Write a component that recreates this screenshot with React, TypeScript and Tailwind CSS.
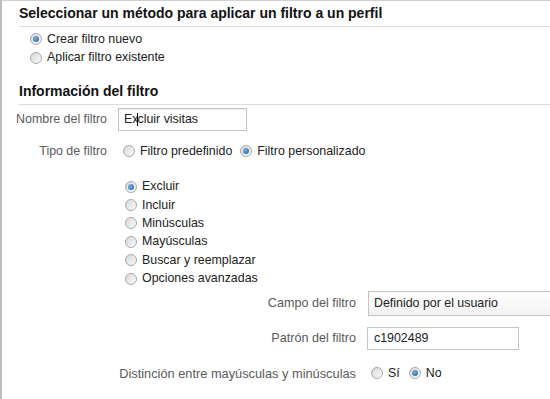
import React from "react";

function Radio({ checked = false }: { checked?: boolean }) {
  return (
    <span className="flex h-[12px] w-[12px] shrink-0 items-center justify-center rounded-full border border-[#a9a9a9] bg-gradient-to-br from-[#d8d8d8] to-[#fbfbfb]">
      {checked && (
        <span className="h-[6px] w-[6px] rounded-full bg-[radial-gradient(circle_at_35%_35%,#7ab0e0,#1f5f9f)]" />
      )}
    </span>
  );
}

function Option({ label, checked = false }: { label: string; checked?: boolean }) {
  return (
    <label className="flex h-[18.4px] items-center gap-[5px] text-[12.4px] text-[#222]">
      <Radio checked={checked} />
      <span>{label}</span>
    </label>
  );
}

function Heading({ children }: { children: React.ReactNode }) {
  return (
    <div className="ml-[17px] border-b border-[#dcdcdc] pb-[4px] text-[14px] font-bold leading-[18px] text-[#111]">
      {children}
    </div>
  );
}

export default function App() {
  const tipos = [
    "Excluir",
    "Incluir",
    "Minúsculas",
    "Mayúsculas",
    "Buscar y reemplazar",
    "Opciones avanzadas",
  ];

  return (
    <div
      className="h-[399px] w-[550px] overflow-hidden border-l-2 border-t border-l-[#bdbdbd] border-t-[#d0d0d0] bg-white"
      style={{ fontFamily: '"Liberation Sans", Arial, sans-serif' }}
    >
      {/* Method */}
      <div className="pt-[3px]">
        <Heading>Seleccionar un método para aplicar un filtro a un perfil</Heading>
        <div className="ml-[28px] mt-[3px] flex flex-col">
          <Option label="Crear filtro nuevo" checked />
          <Option label="Aplicar filtro existente" />
        </div>
      </div>

      {/* Filter info */}
      <div className="mt-[15px]">
        <Heading>Información del filtro</Heading>

        <div className="mt-[3px] flex items-center">
          <span className="w-[105px] text-right text-[12.4px] text-[#5a5a5a]">Nombre del filtro</span>
          <div className="ml-[11px] flex h-[23px] w-[129px] items-center border border-[#c4c4c4] px-[5px] text-[12.4px] text-[#222] shadow-[inset_0_1px_1px_rgba(0,0,0,0.08)]">
            Ex<span className="-mx-[1px] h-[13px] w-[1px] bg-black" />cluir visitas
          </div>
        </div>

        <div className="mt-[11px] flex items-center">
          <span className="w-[105px] text-right text-[12.4px] text-[#5a5a5a]">Tipo de filtro</span>
          <div className="ml-[16px] flex items-center gap-[5px] text-[12.4px] text-[#222]">
            <Radio />
            <span>Filtro predefinido</span>
            <span className="ml-[3px]">
              <Radio checked />
            </span>
            <span>Filtro personalizado</span>
          </div>
        </div>

        <div className="ml-[123px] mt-[17px] flex flex-col">
          {tipos.map((t, i) => (
            <Option key={t} label={t} checked={i === 0} />
          ))}
        </div>

        <div className="mt-[3px] flex flex-col gap-[11px]">
          <div className="flex items-center">
            <span className="w-[354px] text-right text-[12.6px] text-[#5a5a5a]">Campo del filtro</span>
            <div className="ml-[12px] flex h-[25px] flex-1 items-center border border-r-0 border-[#c4c4c4] bg-gradient-to-b from-white to-[#f2f2f2] px-[5px] text-[12.4px] text-[#222]">
              Definido por el usuario
            </div>
          </div>
          <div className="flex items-center">
            <span className="w-[354px] text-right text-[12.6px] text-[#5a5a5a]">Patrón del filtro</span>
            <div className="ml-[11px] flex h-[23px] w-[152px] items-center border border-[#c4c4c4] px-[6px] text-[12.4px] text-[#222]">
              c1902489
            </div>
          </div>
          <div className="mt-[3px] flex items-center">
            <span className="w-[354px] text-right text-[12.8px] text-[#5a5a5a]">
              Distinción entre mayúsculas y minúsculas
            </span>
            <div className="ml-[15px] flex items-center gap-[5px] text-[12.4px] text-[#222]">
              <Radio />
              <span>Sí</span>
              <span className="ml-[4px]">
                <Radio checked />
              </span>
              <span>No</span>
            </div>
          </div>
        </div>
      </div>
    </div>
  );
}
